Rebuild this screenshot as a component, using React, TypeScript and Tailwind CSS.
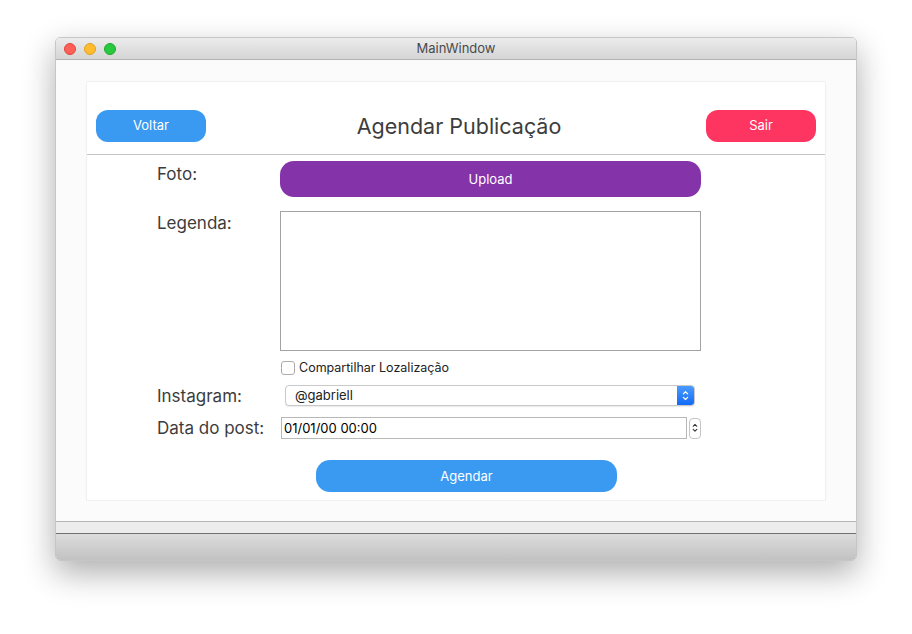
import React from "react";

function Chevrons({ color, size = 8 }: { color: string; size?: number }) {
  return (
    <svg width={size} height={size * 1.6} viewBox="0 0 8 13" fill="none" stroke={color} strokeWidth="1.4" strokeLinecap="round" strokeLinejoin="round">
      <path d="M1.5 4.5 L4 2 L6.5 4.5" />
      <path d="M1.5 8.5 L4 11 L6.5 8.5" />
    </svg>
  );
}

function Label({ children, className = "" }: { children: React.ReactNode; className?: string }) {
  return <div className={`w-[123px] shrink-0 text-[17px] leading-[20px] text-[#3c3c3c] ${className}`}>{children}</div>;
}

export default function App() {
  return (
    <div className="h-[634px] w-[912px] bg-white pl-[55px] pt-[37px] font-['Inter','Noto_Sans',sans-serif]">
      <div className="flex h-[524px] w-[802px] flex-col overflow-hidden rounded-[5px] border border-[#c6c6c6] shadow-[0_12px_32px_rgba(0,0,0,0.32)]">
        {/* title bar */}
        <div className="relative flex h-[22px] shrink-0 items-center border-b border-[#b2b2b2] bg-gradient-to-b from-[#ececec] to-[#d5d5d5]">
          <div className="flex gap-[8px] pl-[8px]">
            <span className="h-[12px] w-[12px] rounded-full border border-[#e0443e] bg-[#fe5f57]" />
            <span className="h-[12px] w-[12px] rounded-full border border-[#dea123] bg-[#febc2e]" />
            <span className="h-[12px] w-[12px] rounded-full border border-[#1aab29] bg-[#28c840]" />
          </div>
          <div className="absolute inset-0 flex items-center justify-center text-[13px] text-[#4a4a4a]">MainWindow</div>
        </div>

        {/* central area */}
        <div className="flex-1 bg-[#fbfbfb] px-[30px] pt-[21px]">
          <div className="h-[420px] w-[740px] border border-[#f0f0f0] bg-white">
            <div className="flex items-center justify-between px-[9px] pt-[28px]">
              <button className="h-[32px] w-[110px] rounded-[12px] bg-[#3a99f1] text-[13px] text-white">Voltar</button>
              <div className="pl-[6px] text-[21.5px] text-[#3d3d3d]">Agendar Publicação</div>
              <button className="h-[32px] w-[110px] rounded-[12px] bg-[#fe3561] text-[13px] text-white">Sair</button>
            </div>
            <div className="mt-[12px] h-px bg-[#c4c4c4]" />

            <div className="pl-[70px]">
              <div className="mt-[6px] flex">
                <Label className="pt-[3px]">Foto:</Label>
                <button className="h-[36px] w-[421px] rounded-[14px] bg-[#8433a9] text-[13px] text-white">Upload</button>
              </div>

              <div className="mt-[14px] flex">
                <Label className="pt-[2px]">Legenda:</Label>
                <div className="h-[140px] w-[421px] border border-[#a3a3a3] bg-white" />
              </div>

              <div className="ml-[124px] mt-[9px] flex h-[16px] items-center gap-[4px]">
                <span className="h-[14px] w-[14px] rounded-[3px] border border-[#adadad] bg-white" />
                <span className="text-[12.5px] leading-[16px] text-[#222]">Compartilhar Lozalização</span>
              </div>

              <div className="mt-[9px] flex h-[21px] items-center">
                <Label>Instagram:</Label>
                <div className="ml-[5px] flex h-[21px] w-[410px] overflow-hidden rounded-[4px] border border-[#c9c9c9] bg-white shadow-[0_1px_1px_rgba(0,0,0,0.08)]">
                  <div className="flex-1 pl-[9px] text-[13px] leading-[19px] text-[#222]">@gabriell</div>
                  <div className="flex w-[17px] items-center justify-center bg-gradient-to-b from-[#4a9bff] to-[#1269f3]">
                    <Chevrons color="#ffffff" size={7} />
                  </div>
                </div>
              </div>

              <div className="mt-[11px] flex h-[22px] items-center">
                <Label>Data do post:</Label>
                <div className="ml-[1px] h-[22px] w-[406px] border border-[#b8b8b8] bg-white pl-[2px] text-[13px] leading-[20px] text-black">01/01/00 00:00</div>
                <div className="ml-[2px] flex h-[21px] w-[12px] items-center justify-center rounded-[4px] border border-[#c4c4c4] bg-white">
                  <Chevrons color="#333333" size={6} />
                </div>
              </div>
            </div>

            <div className="mt-[21px] flex justify-center pl-[21px]">
              <button className="h-[32px] w-[301px] rounded-[14px] bg-[#3a99f1] text-[13px] text-white">Agendar</button>
            </div>
          </div>
        </div>

        {/* bottom bars */}
        <div className="h-[12px] shrink-0 border-t border-[#b5b5b5] bg-[#ececec]" />
        <div className="h-[27px] shrink-0 border-t border-[#6f6f6f] bg-gradient-to-b from-[#dcdcdc] to-[#c2c2c2]" />
      </div>
    </div>
  );
}
